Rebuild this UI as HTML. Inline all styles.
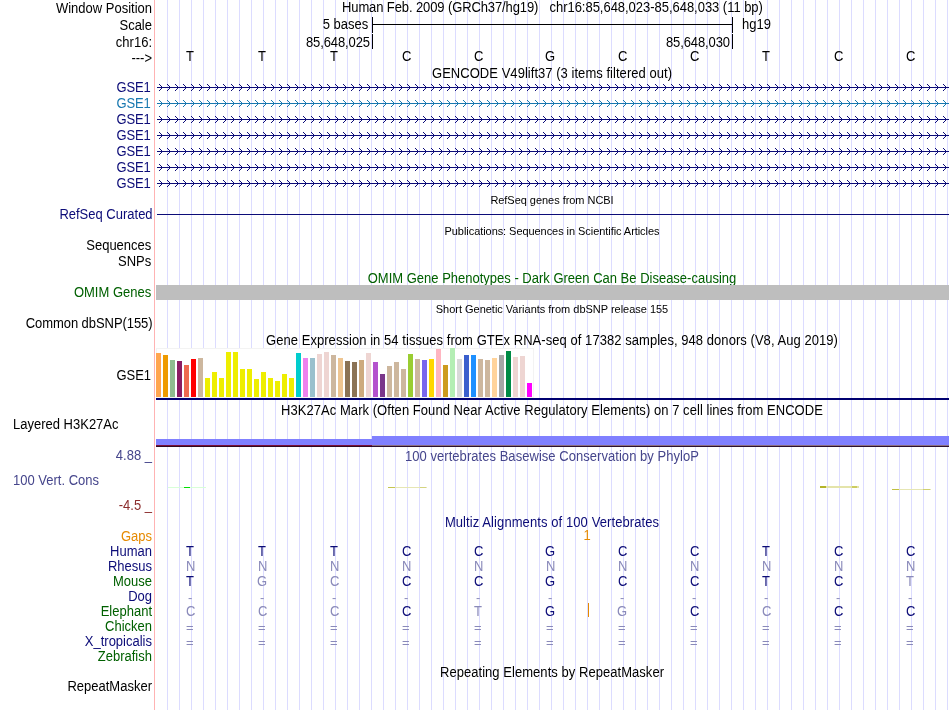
<!DOCTYPE html><html><head><meta charset="utf-8"><title>UCSC Genome Browser</title><style>
html,body{margin:0;padding:0;background:#fff}
#c{position:relative;will-change:transform;width:950px;height:710px;overflow:hidden;background:#fff;font-family:"Liberation Sans",sans-serif;font-size:13px;color:#000}
#c div{position:absolute;white-space:nowrap;line-height:16px;height:16px;transform:scaleY(1.06);transform-origin:0 12.5px}
.l{right:798px;text-align:right}
.t{left:155px;width:794px;text-align:center}
.s{font-size:11px}
.g{top:0;width:1px;height:710px !important;background:#dcdcff;transform:none !important}
.b{text-align:center;width:20px}
.n{color:#00008b}.d{color:#0c0c78}.gr{color:#006000}
svg{position:absolute;left:0;top:0}

</style></head><body><div id="c">
<div class="g" style="left:154px;background:#ffb3b3"></div>
<div class="g" style="left:167px"></div>
<div class="g" style="left:179px"></div>
<div class="g" style="left:191px"></div>
<div class="g" style="left:203px"></div>
<div class="g" style="left:215px"></div>
<div class="g" style="left:227px"></div>
<div class="g" style="left:239px"></div>
<div class="g" style="left:251px"></div>
<div class="g" style="left:263px"></div>
<div class="g" style="left:275px"></div>
<div class="g" style="left:287px"></div>
<div class="g" style="left:299px"></div>
<div class="g" style="left:311px"></div>
<div class="g" style="left:323px"></div>
<div class="g" style="left:335px"></div>
<div class="g" style="left:347px"></div>
<div class="g" style="left:359px"></div>
<div class="g" style="left:371px"></div>
<div class="g" style="left:383px"></div>
<div class="g" style="left:395px"></div>
<div class="g" style="left:407px"></div>
<div class="g" style="left:419px"></div>
<div class="g" style="left:431px"></div>
<div class="g" style="left:443px"></div>
<div class="g" style="left:455px"></div>
<div class="g" style="left:467px"></div>
<div class="g" style="left:479px"></div>
<div class="g" style="left:491px"></div>
<div class="g" style="left:503px"></div>
<div class="g" style="left:515px"></div>
<div class="g" style="left:527px"></div>
<div class="g" style="left:539px"></div>
<div class="g" style="left:551px"></div>
<div class="g" style="left:563px"></div>
<div class="g" style="left:575px"></div>
<div class="g" style="left:587px"></div>
<div class="g" style="left:599px"></div>
<div class="g" style="left:611px"></div>
<div class="g" style="left:623px"></div>
<div class="g" style="left:635px"></div>
<div class="g" style="left:647px"></div>
<div class="g" style="left:659px"></div>
<div class="g" style="left:671px"></div>
<div class="g" style="left:683px"></div>
<div class="g" style="left:695px"></div>
<div class="g" style="left:707px"></div>
<div class="g" style="left:719px"></div>
<div class="g" style="left:731px"></div>
<div class="g" style="left:743px"></div>
<div class="g" style="left:755px"></div>
<div class="g" style="left:767px"></div>
<div class="g" style="left:779px"></div>
<div class="g" style="left:791px"></div>
<div class="g" style="left:803px"></div>
<div class="g" style="left:815px"></div>
<div class="g" style="left:827px"></div>
<div class="g" style="left:839px"></div>
<div class="g" style="left:851px"></div>
<div class="g" style="left:863px"></div>
<div class="g" style="left:875px"></div>
<div class="g" style="left:887px"></div>
<div class="g" style="left:899px"></div>
<div class="g" style="left:911px"></div>
<div class="g" style="left:923px"></div>
<div class="g" style="left:935px"></div>
<div class="g" style="left:947px"></div>
<div class="l " style="top:1px;right:798px;letter-spacing:0px;">Window Position</div>
<div class="l " style="top:18px;right:798px;letter-spacing:0px;">Scale</div>
<div class="l " style="top:35px;right:798px;letter-spacing:0px;">chr16:</div>
<div class="l " style="top:51px;right:798px;letter-spacing:0px;">---&gt;</div>
<div style="top:0px;left:342px;letter-spacing:-0.11px">Human Feb. 2009 (GRCh37/hg19)</div>
<div style="top:0px;left:549.5px;letter-spacing:-0.03px">chr16:85,648,023-85,648,033 (11 bp)</div>
<div style="top:17px;right:581.7px">5 bases</div>
<div style="top:17px;left:742px">hg19</div>
<div style="top:35px;right:580px;letter-spacing:-0.1px">85,648,025</div>
<div style="top:35px;right:220px;letter-spacing:-0.1px">85,648,030</div>
<div class="b" style="top:49px;left:180.1px">T</div>
<div class="b" style="top:49px;left:252.1px">T</div>
<div class="b" style="top:49px;left:324.1px">T</div>
<div class="b" style="top:49px;left:396.7px">C</div>
<div class="b" style="top:49px;left:468.7px">C</div>
<div class="b" style="top:49px;left:540.0px">G</div>
<div class="b" style="top:49px;left:612.7px">C</div>
<div class="b" style="top:49px;left:684.7px">C</div>
<div class="b" style="top:49px;left:756.1px">T</div>
<div class="b" style="top:49px;left:828.7px">C</div>
<div class="b" style="top:49px;left:900.7px">C</div>
<div class="t " style="top:66px;letter-spacing:0.04px;">GENCODE V49lift37 (3 items filtered out)</div>
<div class="l " style="top:80px;right:799.35px;letter-spacing:-0.15px;color:#0c0c78">GSE1</div>
<div class="l " style="top:96px;right:799.35px;letter-spacing:-0.15px;color:#1878b0">GSE1</div>
<div class="l " style="top:112px;right:799.35px;letter-spacing:-0.15px;color:#0c0c78">GSE1</div>
<div class="l " style="top:128px;right:799.35px;letter-spacing:-0.15px;color:#0c0c78">GSE1</div>
<div class="l " style="top:144px;right:799.35px;letter-spacing:-0.15px;color:#0c0c78">GSE1</div>
<div class="l " style="top:160px;right:799.35px;letter-spacing:-0.15px;color:#0c0c78">GSE1</div>
<div class="l " style="top:176px;right:799.35px;letter-spacing:-0.15px;color:#0c0c78">GSE1</div>
<div class="t s" style="top:192px;letter-spacing:-0.04px;">RefSeq genes from NCBI</div>
<div class="l " style="top:207px;right:797.4px;letter-spacing:0px;color:#0c0c78">RefSeq Curated</div>
<div class="t s" style="top:223px;letter-spacing:-0.06px;">Publications: Sequences in Scientific Articles</div>
<div class="l " style="top:238px;right:798.7px;letter-spacing:0px;">Sequences</div>
<div class="l " style="top:254px;right:798.8px;letter-spacing:0px;">SNPs</div>
<div class="t " style="top:271px;letter-spacing:0px;color:#006000">OMIM Gene Phenotypes - Dark Green Can Be Disease-causing</div>
<div class="l " style="top:285px;right:798.8px;letter-spacing:0px;color:#006000">OMIM Genes</div>
<div class="t s" style="top:301px;letter-spacing:-0.016px;">Short Genetic Variants from dbSNP release 155</div>
<div class="l " style="top:316px;right:797.4599999999999px;letter-spacing:-0.06px;">Common dbSNP(155)</div>
<div class="t " style="top:333px;letter-spacing:0.052px;">Gene Expression in 54 tissues from GTEx RNA-seq of 17382 samples, 948 donors (V8, Aug 2019)</div>
<div class="l " style="top:368px;right:799.1px;letter-spacing:-0.1px;">GSE1</div>
<div class="t " style="top:403px;letter-spacing:0.05px;">H3K27Ac Mark (Often Found Near Active Regulatory Elements) on 7 cell lines from ENCODE</div>
<div style="top:417px;left:13px">Layered H3K27Ac</div>
<div class="l " style="top:448px;right:798px;letter-spacing:0px;color:#46468c">4.88 _</div>
<div class="t " style="top:449px;letter-spacing:0.043px;color:#46468c">100 vertebrates Basewise Conservation by PhyloP</div>
<div style="top:473px;left:13px;color:#46468c">100 Vert. Cons</div>
<div class="l " style="top:498px;right:798px;letter-spacing:0px;color:#8c2d2d">-4.5 _</div>
<div class="t " style="top:515px;letter-spacing:0.09px;color:#0c0c78">Multiz Alignments of 100 Vertebrates</div>
<div class="l " style="top:529px;right:798px;letter-spacing:0px;color:#e68a00">Gaps</div>
<div class="l " style="top:544px;right:798px;letter-spacing:0px;color:#0c0c78">Human</div>
<div class="l " style="top:559px;right:798px;letter-spacing:0px;color:#0c0c78">Rhesus</div>
<div class="l " style="top:574px;right:798px;letter-spacing:0px;color:#006000">Mouse</div>
<div class="l " style="top:589px;right:798px;letter-spacing:0px;color:#0c0c78">Dog</div>
<div class="l " style="top:604px;right:798px;letter-spacing:0px;color:#006000">Elephant</div>
<div class="l " style="top:619px;right:798px;letter-spacing:0px;color:#006000">Chicken</div>
<div class="l " style="top:634px;right:798px;letter-spacing:0px;color:#0c0c78">X_tropicalis</div>
<div class="l " style="top:649px;right:798px;letter-spacing:0px;color:#006000">Zebrafish</div>
<div class="t " style="top:665px;letter-spacing:0.045px;">Repeating Elements by RepeatMasker</div>
<div class="l " style="top:679px;right:798px;letter-spacing:0px;">RepeatMasker</div>
<div class="b" style="top:544px;left:180.1px;color:#0c0c78;">T</div>
<div class="b" style="top:544px;left:252.1px;color:#0c0c78;">T</div>
<div class="b" style="top:544px;left:324.1px;color:#0c0c78;">T</div>
<div class="b" style="top:544px;left:396.7px;color:#0c0c78;">C</div>
<div class="b" style="top:544px;left:468.7px;color:#0c0c78;">C</div>
<div class="b" style="top:544px;left:540.0px;color:#0c0c78;">G</div>
<div class="b" style="top:544px;left:612.7px;color:#0c0c78;">C</div>
<div class="b" style="top:544px;left:684.7px;color:#0c0c78;">C</div>
<div class="b" style="top:544px;left:756.1px;color:#0c0c78;">T</div>
<div class="b" style="top:544px;left:828.7px;color:#0c0c78;">C</div>
<div class="b" style="top:544px;left:900.7px;color:#0c0c78;">C</div>
<div class="b" style="top:559px;left:180.7px;color:#8a8aba;">N</div>
<div class="b" style="top:559px;left:252.7px;color:#8a8aba;">N</div>
<div class="b" style="top:559px;left:324.7px;color:#8a8aba;">N</div>
<div class="b" style="top:559px;left:396.7px;color:#8a8aba;">N</div>
<div class="b" style="top:559px;left:468.7px;color:#8a8aba;">N</div>
<div class="b" style="top:559px;left:540.7px;color:#8a8aba;">N</div>
<div class="b" style="top:559px;left:612.7px;color:#8a8aba;">N</div>
<div class="b" style="top:559px;left:684.7px;color:#8a8aba;">N</div>
<div class="b" style="top:559px;left:756.7px;color:#8a8aba;">N</div>
<div class="b" style="top:559px;left:828.7px;color:#8a8aba;">N</div>
<div class="b" style="top:559px;left:900.7px;color:#8a8aba;">N</div>
<div class="b" style="top:574px;left:180.1px;color:#0c0c78;">T</div>
<div class="b" style="top:574px;left:252.0px;color:#8a8aba;">G</div>
<div class="b" style="top:574px;left:324.7px;color:#8a8aba;">C</div>
<div class="b" style="top:574px;left:396.7px;color:#0c0c78;">C</div>
<div class="b" style="top:574px;left:468.7px;color:#0c0c78;">C</div>
<div class="b" style="top:574px;left:540.0px;color:#0c0c78;">G</div>
<div class="b" style="top:574px;left:612.7px;color:#0c0c78;">C</div>
<div class="b" style="top:574px;left:684.7px;color:#0c0c78;">C</div>
<div class="b" style="top:574px;left:756.1px;color:#0c0c78;">T</div>
<div class="b" style="top:574px;left:828.7px;color:#0c0c78;">C</div>
<div class="b" style="top:574px;left:900.1px;color:#8a8aba;">T</div>
<div class="b" style="top:589px;left:180.1px;color:#8a8aba;transform:translateY(.8px);">-</div>
<div class="b" style="top:589px;left:252.1px;color:#8a8aba;transform:translateY(.8px);">-</div>
<div class="b" style="top:589px;left:324.1px;color:#8a8aba;transform:translateY(.8px);">-</div>
<div class="b" style="top:589px;left:396.1px;color:#8a8aba;transform:translateY(.8px);">-</div>
<div class="b" style="top:589px;left:468.1px;color:#8a8aba;transform:translateY(.8px);">-</div>
<div class="b" style="top:589px;left:540.1px;color:#8a8aba;transform:translateY(.8px);">-</div>
<div class="b" style="top:589px;left:612.1px;color:#8a8aba;transform:translateY(.8px);">-</div>
<div class="b" style="top:589px;left:684.1px;color:#8a8aba;transform:translateY(.8px);">-</div>
<div class="b" style="top:589px;left:756.1px;color:#8a8aba;transform:translateY(.8px);">-</div>
<div class="b" style="top:589px;left:828.1px;color:#8a8aba;transform:translateY(.8px);">-</div>
<div class="b" style="top:589px;left:900.1px;color:#8a8aba;transform:translateY(.8px);">-</div>
<div class="b" style="top:604px;left:180.7px;color:#8a8aba;">C</div>
<div class="b" style="top:604px;left:252.7px;color:#8a8aba;">C</div>
<div class="b" style="top:604px;left:324.7px;color:#8a8aba;">C</div>
<div class="b" style="top:604px;left:396.7px;color:#0c0c78;">C</div>
<div class="b" style="top:604px;left:468.1px;color:#8a8aba;">T</div>
<div class="b" style="top:604px;left:540.0px;color:#0c0c78;">G</div>
<div class="b" style="top:604px;left:612.0px;color:#8a8aba;">G</div>
<div class="b" style="top:604px;left:684.7px;color:#0c0c78;">C</div>
<div class="b" style="top:604px;left:756.7px;color:#8a8aba;">C</div>
<div class="b" style="top:604px;left:828.7px;color:#0c0c78;">C</div>
<div class="b" style="top:604px;left:900.7px;color:#0c0c78;">C</div>
<div class="b" style="top:619px;left:179.8px;color:#8a8aba;transform:translateY(1.2px) scaleY(.85);transform-origin:0 8.3px;">=</div>
<div class="b" style="top:619px;left:251.8px;color:#8a8aba;transform:translateY(1.2px) scaleY(.85);transform-origin:0 8.3px;">=</div>
<div class="b" style="top:619px;left:323.8px;color:#8a8aba;transform:translateY(1.2px) scaleY(.85);transform-origin:0 8.3px;">=</div>
<div class="b" style="top:619px;left:395.8px;color:#8a8aba;transform:translateY(1.2px) scaleY(.85);transform-origin:0 8.3px;">=</div>
<div class="b" style="top:619px;left:467.8px;color:#8a8aba;transform:translateY(1.2px) scaleY(.85);transform-origin:0 8.3px;">=</div>
<div class="b" style="top:619px;left:539.8px;color:#8a8aba;transform:translateY(1.2px) scaleY(.85);transform-origin:0 8.3px;">=</div>
<div class="b" style="top:619px;left:611.8px;color:#8a8aba;transform:translateY(1.2px) scaleY(.85);transform-origin:0 8.3px;">=</div>
<div class="b" style="top:619px;left:683.8px;color:#8a8aba;transform:translateY(1.2px) scaleY(.85);transform-origin:0 8.3px;">=</div>
<div class="b" style="top:619px;left:755.8px;color:#8a8aba;transform:translateY(1.2px) scaleY(.85);transform-origin:0 8.3px;">=</div>
<div class="b" style="top:619px;left:827.8px;color:#8a8aba;transform:translateY(1.2px) scaleY(.85);transform-origin:0 8.3px;">=</div>
<div class="b" style="top:619px;left:899.8px;color:#8a8aba;transform:translateY(1.2px) scaleY(.85);transform-origin:0 8.3px;">=</div>
<div class="b" style="top:634px;left:179.8px;color:#8a8aba;transform:translateY(1.2px) scaleY(.85);transform-origin:0 8.3px;">=</div>
<div class="b" style="top:634px;left:251.8px;color:#8a8aba;transform:translateY(1.2px) scaleY(.85);transform-origin:0 8.3px;">=</div>
<div class="b" style="top:634px;left:323.8px;color:#8a8aba;transform:translateY(1.2px) scaleY(.85);transform-origin:0 8.3px;">=</div>
<div class="b" style="top:634px;left:395.8px;color:#8a8aba;transform:translateY(1.2px) scaleY(.85);transform-origin:0 8.3px;">=</div>
<div class="b" style="top:634px;left:467.8px;color:#8a8aba;transform:translateY(1.2px) scaleY(.85);transform-origin:0 8.3px;">=</div>
<div class="b" style="top:634px;left:539.8px;color:#8a8aba;transform:translateY(1.2px) scaleY(.85);transform-origin:0 8.3px;">=</div>
<div class="b" style="top:634px;left:611.8px;color:#8a8aba;transform:translateY(1.2px) scaleY(.85);transform-origin:0 8.3px;">=</div>
<div class="b" style="top:634px;left:683.8px;color:#8a8aba;transform:translateY(1.2px) scaleY(.85);transform-origin:0 8.3px;">=</div>
<div class="b" style="top:634px;left:755.8px;color:#8a8aba;transform:translateY(1.2px) scaleY(.85);transform-origin:0 8.3px;">=</div>
<div class="b" style="top:634px;left:827.8px;color:#8a8aba;transform:translateY(1.2px) scaleY(.85);transform-origin:0 8.3px;">=</div>
<div class="b" style="top:634px;left:899.8px;color:#8a8aba;transform:translateY(1.2px) scaleY(.85);transform-origin:0 8.3px;">=</div>
<div style="top:528px;left:583.5px;color:#e68a00">1</div>
<svg width="950" height="710" viewBox="0 0 950 710" shape-rendering="crispEdges">
<path d="M372.5 17v15.5M732.5 17v15.5M372 24.5h361M372.5 34v15M732.5 34v15" stroke="#000" fill="none"/>
<path d="M157 87.5h792" stroke="#0c0c78" fill="none"/>
<path d="M159 84l3.5 3.5l-3.5 3.5M167 84l3.5 3.5l-3.5 3.5M175 84l3.5 3.5l-3.5 3.5M183 84l3.5 3.5l-3.5 3.5M191 84l3.5 3.5l-3.5 3.5M199 84l3.5 3.5l-3.5 3.5M207 84l3.5 3.5l-3.5 3.5M215 84l3.5 3.5l-3.5 3.5M223 84l3.5 3.5l-3.5 3.5M231 84l3.5 3.5l-3.5 3.5M239 84l3.5 3.5l-3.5 3.5M247 84l3.5 3.5l-3.5 3.5M255 84l3.5 3.5l-3.5 3.5M263 84l3.5 3.5l-3.5 3.5M271 84l3.5 3.5l-3.5 3.5M279 84l3.5 3.5l-3.5 3.5M287 84l3.5 3.5l-3.5 3.5M295 84l3.5 3.5l-3.5 3.5M303 84l3.5 3.5l-3.5 3.5M311 84l3.5 3.5l-3.5 3.5M319 84l3.5 3.5l-3.5 3.5M327 84l3.5 3.5l-3.5 3.5M335 84l3.5 3.5l-3.5 3.5M343 84l3.5 3.5l-3.5 3.5M351 84l3.5 3.5l-3.5 3.5M359 84l3.5 3.5l-3.5 3.5M367 84l3.5 3.5l-3.5 3.5M375 84l3.5 3.5l-3.5 3.5M383 84l3.5 3.5l-3.5 3.5M391 84l3.5 3.5l-3.5 3.5M399 84l3.5 3.5l-3.5 3.5M407 84l3.5 3.5l-3.5 3.5M415 84l3.5 3.5l-3.5 3.5M423 84l3.5 3.5l-3.5 3.5M431 84l3.5 3.5l-3.5 3.5M439 84l3.5 3.5l-3.5 3.5M447 84l3.5 3.5l-3.5 3.5M455 84l3.5 3.5l-3.5 3.5M463 84l3.5 3.5l-3.5 3.5M471 84l3.5 3.5l-3.5 3.5M479 84l3.5 3.5l-3.5 3.5M487 84l3.5 3.5l-3.5 3.5M495 84l3.5 3.5l-3.5 3.5M503 84l3.5 3.5l-3.5 3.5M511 84l3.5 3.5l-3.5 3.5M519 84l3.5 3.5l-3.5 3.5M527 84l3.5 3.5l-3.5 3.5M535 84l3.5 3.5l-3.5 3.5M543 84l3.5 3.5l-3.5 3.5M551 84l3.5 3.5l-3.5 3.5M559 84l3.5 3.5l-3.5 3.5M567 84l3.5 3.5l-3.5 3.5M575 84l3.5 3.5l-3.5 3.5M583 84l3.5 3.5l-3.5 3.5M591 84l3.5 3.5l-3.5 3.5M599 84l3.5 3.5l-3.5 3.5M607 84l3.5 3.5l-3.5 3.5M615 84l3.5 3.5l-3.5 3.5M623 84l3.5 3.5l-3.5 3.5M631 84l3.5 3.5l-3.5 3.5M639 84l3.5 3.5l-3.5 3.5M647 84l3.5 3.5l-3.5 3.5M655 84l3.5 3.5l-3.5 3.5M663 84l3.5 3.5l-3.5 3.5M671 84l3.5 3.5l-3.5 3.5M679 84l3.5 3.5l-3.5 3.5M687 84l3.5 3.5l-3.5 3.5M695 84l3.5 3.5l-3.5 3.5M703 84l3.5 3.5l-3.5 3.5M711 84l3.5 3.5l-3.5 3.5M719 84l3.5 3.5l-3.5 3.5M727 84l3.5 3.5l-3.5 3.5M735 84l3.5 3.5l-3.5 3.5M743 84l3.5 3.5l-3.5 3.5M751 84l3.5 3.5l-3.5 3.5M759 84l3.5 3.5l-3.5 3.5M767 84l3.5 3.5l-3.5 3.5M775 84l3.5 3.5l-3.5 3.5M783 84l3.5 3.5l-3.5 3.5M791 84l3.5 3.5l-3.5 3.5M799 84l3.5 3.5l-3.5 3.5M807 84l3.5 3.5l-3.5 3.5M815 84l3.5 3.5l-3.5 3.5M823 84l3.5 3.5l-3.5 3.5M831 84l3.5 3.5l-3.5 3.5M839 84l3.5 3.5l-3.5 3.5M847 84l3.5 3.5l-3.5 3.5M855 84l3.5 3.5l-3.5 3.5M863 84l3.5 3.5l-3.5 3.5M871 84l3.5 3.5l-3.5 3.5M879 84l3.5 3.5l-3.5 3.5M887 84l3.5 3.5l-3.5 3.5M895 84l3.5 3.5l-3.5 3.5M903 84l3.5 3.5l-3.5 3.5M911 84l3.5 3.5l-3.5 3.5M919 84l3.5 3.5l-3.5 3.5M927 84l3.5 3.5l-3.5 3.5M935 84l3.5 3.5l-3.5 3.5M943 84l3.5 3.5l-3.5 3.5" stroke="#0c0c78" fill="none" shape-rendering="auto"/>
<path d="M157 103.5h792" stroke="#1878b0" fill="none"/>
<path d="M159 100l3.5 3.5l-3.5 3.5M167 100l3.5 3.5l-3.5 3.5M175 100l3.5 3.5l-3.5 3.5M183 100l3.5 3.5l-3.5 3.5M191 100l3.5 3.5l-3.5 3.5M199 100l3.5 3.5l-3.5 3.5M207 100l3.5 3.5l-3.5 3.5M215 100l3.5 3.5l-3.5 3.5M223 100l3.5 3.5l-3.5 3.5M231 100l3.5 3.5l-3.5 3.5M239 100l3.5 3.5l-3.5 3.5M247 100l3.5 3.5l-3.5 3.5M255 100l3.5 3.5l-3.5 3.5M263 100l3.5 3.5l-3.5 3.5M271 100l3.5 3.5l-3.5 3.5M279 100l3.5 3.5l-3.5 3.5M287 100l3.5 3.5l-3.5 3.5M295 100l3.5 3.5l-3.5 3.5M303 100l3.5 3.5l-3.5 3.5M311 100l3.5 3.5l-3.5 3.5M319 100l3.5 3.5l-3.5 3.5M327 100l3.5 3.5l-3.5 3.5M335 100l3.5 3.5l-3.5 3.5M343 100l3.5 3.5l-3.5 3.5M351 100l3.5 3.5l-3.5 3.5M359 100l3.5 3.5l-3.5 3.5M367 100l3.5 3.5l-3.5 3.5M375 100l3.5 3.5l-3.5 3.5M383 100l3.5 3.5l-3.5 3.5M391 100l3.5 3.5l-3.5 3.5M399 100l3.5 3.5l-3.5 3.5M407 100l3.5 3.5l-3.5 3.5M415 100l3.5 3.5l-3.5 3.5M423 100l3.5 3.5l-3.5 3.5M431 100l3.5 3.5l-3.5 3.5M439 100l3.5 3.5l-3.5 3.5M447 100l3.5 3.5l-3.5 3.5M455 100l3.5 3.5l-3.5 3.5M463 100l3.5 3.5l-3.5 3.5M471 100l3.5 3.5l-3.5 3.5M479 100l3.5 3.5l-3.5 3.5M487 100l3.5 3.5l-3.5 3.5M495 100l3.5 3.5l-3.5 3.5M503 100l3.5 3.5l-3.5 3.5M511 100l3.5 3.5l-3.5 3.5M519 100l3.5 3.5l-3.5 3.5M527 100l3.5 3.5l-3.5 3.5M535 100l3.5 3.5l-3.5 3.5M543 100l3.5 3.5l-3.5 3.5M551 100l3.5 3.5l-3.5 3.5M559 100l3.5 3.5l-3.5 3.5M567 100l3.5 3.5l-3.5 3.5M575 100l3.5 3.5l-3.5 3.5M583 100l3.5 3.5l-3.5 3.5M591 100l3.5 3.5l-3.5 3.5M599 100l3.5 3.5l-3.5 3.5M607 100l3.5 3.5l-3.5 3.5M615 100l3.5 3.5l-3.5 3.5M623 100l3.5 3.5l-3.5 3.5M631 100l3.5 3.5l-3.5 3.5M639 100l3.5 3.5l-3.5 3.5M647 100l3.5 3.5l-3.5 3.5M655 100l3.5 3.5l-3.5 3.5M663 100l3.5 3.5l-3.5 3.5M671 100l3.5 3.5l-3.5 3.5M679 100l3.5 3.5l-3.5 3.5M687 100l3.5 3.5l-3.5 3.5M695 100l3.5 3.5l-3.5 3.5M703 100l3.5 3.5l-3.5 3.5M711 100l3.5 3.5l-3.5 3.5M719 100l3.5 3.5l-3.5 3.5M727 100l3.5 3.5l-3.5 3.5M735 100l3.5 3.5l-3.5 3.5M743 100l3.5 3.5l-3.5 3.5M751 100l3.5 3.5l-3.5 3.5M759 100l3.5 3.5l-3.5 3.5M767 100l3.5 3.5l-3.5 3.5M775 100l3.5 3.5l-3.5 3.5M783 100l3.5 3.5l-3.5 3.5M791 100l3.5 3.5l-3.5 3.5M799 100l3.5 3.5l-3.5 3.5M807 100l3.5 3.5l-3.5 3.5M815 100l3.5 3.5l-3.5 3.5M823 100l3.5 3.5l-3.5 3.5M831 100l3.5 3.5l-3.5 3.5M839 100l3.5 3.5l-3.5 3.5M847 100l3.5 3.5l-3.5 3.5M855 100l3.5 3.5l-3.5 3.5M863 100l3.5 3.5l-3.5 3.5M871 100l3.5 3.5l-3.5 3.5M879 100l3.5 3.5l-3.5 3.5M887 100l3.5 3.5l-3.5 3.5M895 100l3.5 3.5l-3.5 3.5M903 100l3.5 3.5l-3.5 3.5M911 100l3.5 3.5l-3.5 3.5M919 100l3.5 3.5l-3.5 3.5M927 100l3.5 3.5l-3.5 3.5M935 100l3.5 3.5l-3.5 3.5M943 100l3.5 3.5l-3.5 3.5" stroke="#1878b0" fill="none" shape-rendering="auto"/>
<path d="M157 119.5h792" stroke="#0c0c78" fill="none"/>
<path d="M159 116l3.5 3.5l-3.5 3.5M167 116l3.5 3.5l-3.5 3.5M175 116l3.5 3.5l-3.5 3.5M183 116l3.5 3.5l-3.5 3.5M191 116l3.5 3.5l-3.5 3.5M199 116l3.5 3.5l-3.5 3.5M207 116l3.5 3.5l-3.5 3.5M215 116l3.5 3.5l-3.5 3.5M223 116l3.5 3.5l-3.5 3.5M231 116l3.5 3.5l-3.5 3.5M239 116l3.5 3.5l-3.5 3.5M247 116l3.5 3.5l-3.5 3.5M255 116l3.5 3.5l-3.5 3.5M263 116l3.5 3.5l-3.5 3.5M271 116l3.5 3.5l-3.5 3.5M279 116l3.5 3.5l-3.5 3.5M287 116l3.5 3.5l-3.5 3.5M295 116l3.5 3.5l-3.5 3.5M303 116l3.5 3.5l-3.5 3.5M311 116l3.5 3.5l-3.5 3.5M319 116l3.5 3.5l-3.5 3.5M327 116l3.5 3.5l-3.5 3.5M335 116l3.5 3.5l-3.5 3.5M343 116l3.5 3.5l-3.5 3.5M351 116l3.5 3.5l-3.5 3.5M359 116l3.5 3.5l-3.5 3.5M367 116l3.5 3.5l-3.5 3.5M375 116l3.5 3.5l-3.5 3.5M383 116l3.5 3.5l-3.5 3.5M391 116l3.5 3.5l-3.5 3.5M399 116l3.5 3.5l-3.5 3.5M407 116l3.5 3.5l-3.5 3.5M415 116l3.5 3.5l-3.5 3.5M423 116l3.5 3.5l-3.5 3.5M431 116l3.5 3.5l-3.5 3.5M439 116l3.5 3.5l-3.5 3.5M447 116l3.5 3.5l-3.5 3.5M455 116l3.5 3.5l-3.5 3.5M463 116l3.5 3.5l-3.5 3.5M471 116l3.5 3.5l-3.5 3.5M479 116l3.5 3.5l-3.5 3.5M487 116l3.5 3.5l-3.5 3.5M495 116l3.5 3.5l-3.5 3.5M503 116l3.5 3.5l-3.5 3.5M511 116l3.5 3.5l-3.5 3.5M519 116l3.5 3.5l-3.5 3.5M527 116l3.5 3.5l-3.5 3.5M535 116l3.5 3.5l-3.5 3.5M543 116l3.5 3.5l-3.5 3.5M551 116l3.5 3.5l-3.5 3.5M559 116l3.5 3.5l-3.5 3.5M567 116l3.5 3.5l-3.5 3.5M575 116l3.5 3.5l-3.5 3.5M583 116l3.5 3.5l-3.5 3.5M591 116l3.5 3.5l-3.5 3.5M599 116l3.5 3.5l-3.5 3.5M607 116l3.5 3.5l-3.5 3.5M615 116l3.5 3.5l-3.5 3.5M623 116l3.5 3.5l-3.5 3.5M631 116l3.5 3.5l-3.5 3.5M639 116l3.5 3.5l-3.5 3.5M647 116l3.5 3.5l-3.5 3.5M655 116l3.5 3.5l-3.5 3.5M663 116l3.5 3.5l-3.5 3.5M671 116l3.5 3.5l-3.5 3.5M679 116l3.5 3.5l-3.5 3.5M687 116l3.5 3.5l-3.5 3.5M695 116l3.5 3.5l-3.5 3.5M703 116l3.5 3.5l-3.5 3.5M711 116l3.5 3.5l-3.5 3.5M719 116l3.5 3.5l-3.5 3.5M727 116l3.5 3.5l-3.5 3.5M735 116l3.5 3.5l-3.5 3.5M743 116l3.5 3.5l-3.5 3.5M751 116l3.5 3.5l-3.5 3.5M759 116l3.5 3.5l-3.5 3.5M767 116l3.5 3.5l-3.5 3.5M775 116l3.5 3.5l-3.5 3.5M783 116l3.5 3.5l-3.5 3.5M791 116l3.5 3.5l-3.5 3.5M799 116l3.5 3.5l-3.5 3.5M807 116l3.5 3.5l-3.5 3.5M815 116l3.5 3.5l-3.5 3.5M823 116l3.5 3.5l-3.5 3.5M831 116l3.5 3.5l-3.5 3.5M839 116l3.5 3.5l-3.5 3.5M847 116l3.5 3.5l-3.5 3.5M855 116l3.5 3.5l-3.5 3.5M863 116l3.5 3.5l-3.5 3.5M871 116l3.5 3.5l-3.5 3.5M879 116l3.5 3.5l-3.5 3.5M887 116l3.5 3.5l-3.5 3.5M895 116l3.5 3.5l-3.5 3.5M903 116l3.5 3.5l-3.5 3.5M911 116l3.5 3.5l-3.5 3.5M919 116l3.5 3.5l-3.5 3.5M927 116l3.5 3.5l-3.5 3.5M935 116l3.5 3.5l-3.5 3.5M943 116l3.5 3.5l-3.5 3.5" stroke="#0c0c78" fill="none" shape-rendering="auto"/>
<path d="M157 135.5h792" stroke="#0c0c78" fill="none"/>
<path d="M159 132l3.5 3.5l-3.5 3.5M167 132l3.5 3.5l-3.5 3.5M175 132l3.5 3.5l-3.5 3.5M183 132l3.5 3.5l-3.5 3.5M191 132l3.5 3.5l-3.5 3.5M199 132l3.5 3.5l-3.5 3.5M207 132l3.5 3.5l-3.5 3.5M215 132l3.5 3.5l-3.5 3.5M223 132l3.5 3.5l-3.5 3.5M231 132l3.5 3.5l-3.5 3.5M239 132l3.5 3.5l-3.5 3.5M247 132l3.5 3.5l-3.5 3.5M255 132l3.5 3.5l-3.5 3.5M263 132l3.5 3.5l-3.5 3.5M271 132l3.5 3.5l-3.5 3.5M279 132l3.5 3.5l-3.5 3.5M287 132l3.5 3.5l-3.5 3.5M295 132l3.5 3.5l-3.5 3.5M303 132l3.5 3.5l-3.5 3.5M311 132l3.5 3.5l-3.5 3.5M319 132l3.5 3.5l-3.5 3.5M327 132l3.5 3.5l-3.5 3.5M335 132l3.5 3.5l-3.5 3.5M343 132l3.5 3.5l-3.5 3.5M351 132l3.5 3.5l-3.5 3.5M359 132l3.5 3.5l-3.5 3.5M367 132l3.5 3.5l-3.5 3.5M375 132l3.5 3.5l-3.5 3.5M383 132l3.5 3.5l-3.5 3.5M391 132l3.5 3.5l-3.5 3.5M399 132l3.5 3.5l-3.5 3.5M407 132l3.5 3.5l-3.5 3.5M415 132l3.5 3.5l-3.5 3.5M423 132l3.5 3.5l-3.5 3.5M431 132l3.5 3.5l-3.5 3.5M439 132l3.5 3.5l-3.5 3.5M447 132l3.5 3.5l-3.5 3.5M455 132l3.5 3.5l-3.5 3.5M463 132l3.5 3.5l-3.5 3.5M471 132l3.5 3.5l-3.5 3.5M479 132l3.5 3.5l-3.5 3.5M487 132l3.5 3.5l-3.5 3.5M495 132l3.5 3.5l-3.5 3.5M503 132l3.5 3.5l-3.5 3.5M511 132l3.5 3.5l-3.5 3.5M519 132l3.5 3.5l-3.5 3.5M527 132l3.5 3.5l-3.5 3.5M535 132l3.5 3.5l-3.5 3.5M543 132l3.5 3.5l-3.5 3.5M551 132l3.5 3.5l-3.5 3.5M559 132l3.5 3.5l-3.5 3.5M567 132l3.5 3.5l-3.5 3.5M575 132l3.5 3.5l-3.5 3.5M583 132l3.5 3.5l-3.5 3.5M591 132l3.5 3.5l-3.5 3.5M599 132l3.5 3.5l-3.5 3.5M607 132l3.5 3.5l-3.5 3.5M615 132l3.5 3.5l-3.5 3.5M623 132l3.5 3.5l-3.5 3.5M631 132l3.5 3.5l-3.5 3.5M639 132l3.5 3.5l-3.5 3.5M647 132l3.5 3.5l-3.5 3.5M655 132l3.5 3.5l-3.5 3.5M663 132l3.5 3.5l-3.5 3.5M671 132l3.5 3.5l-3.5 3.5M679 132l3.5 3.5l-3.5 3.5M687 132l3.5 3.5l-3.5 3.5M695 132l3.5 3.5l-3.5 3.5M703 132l3.5 3.5l-3.5 3.5M711 132l3.5 3.5l-3.5 3.5M719 132l3.5 3.5l-3.5 3.5M727 132l3.5 3.5l-3.5 3.5M735 132l3.5 3.5l-3.5 3.5M743 132l3.5 3.5l-3.5 3.5M751 132l3.5 3.5l-3.5 3.5M759 132l3.5 3.5l-3.5 3.5M767 132l3.5 3.5l-3.5 3.5M775 132l3.5 3.5l-3.5 3.5M783 132l3.5 3.5l-3.5 3.5M791 132l3.5 3.5l-3.5 3.5M799 132l3.5 3.5l-3.5 3.5M807 132l3.5 3.5l-3.5 3.5M815 132l3.5 3.5l-3.5 3.5M823 132l3.5 3.5l-3.5 3.5M831 132l3.5 3.5l-3.5 3.5M839 132l3.5 3.5l-3.5 3.5M847 132l3.5 3.5l-3.5 3.5M855 132l3.5 3.5l-3.5 3.5M863 132l3.5 3.5l-3.5 3.5M871 132l3.5 3.5l-3.5 3.5M879 132l3.5 3.5l-3.5 3.5M887 132l3.5 3.5l-3.5 3.5M895 132l3.5 3.5l-3.5 3.5M903 132l3.5 3.5l-3.5 3.5M911 132l3.5 3.5l-3.5 3.5M919 132l3.5 3.5l-3.5 3.5M927 132l3.5 3.5l-3.5 3.5M935 132l3.5 3.5l-3.5 3.5M943 132l3.5 3.5l-3.5 3.5" stroke="#0c0c78" fill="none" shape-rendering="auto"/>
<path d="M157 151.5h792" stroke="#0c0c78" fill="none"/>
<path d="M159 148l3.5 3.5l-3.5 3.5M167 148l3.5 3.5l-3.5 3.5M175 148l3.5 3.5l-3.5 3.5M183 148l3.5 3.5l-3.5 3.5M191 148l3.5 3.5l-3.5 3.5M199 148l3.5 3.5l-3.5 3.5M207 148l3.5 3.5l-3.5 3.5M215 148l3.5 3.5l-3.5 3.5M223 148l3.5 3.5l-3.5 3.5M231 148l3.5 3.5l-3.5 3.5M239 148l3.5 3.5l-3.5 3.5M247 148l3.5 3.5l-3.5 3.5M255 148l3.5 3.5l-3.5 3.5M263 148l3.5 3.5l-3.5 3.5M271 148l3.5 3.5l-3.5 3.5M279 148l3.5 3.5l-3.5 3.5M287 148l3.5 3.5l-3.5 3.5M295 148l3.5 3.5l-3.5 3.5M303 148l3.5 3.5l-3.5 3.5M311 148l3.5 3.5l-3.5 3.5M319 148l3.5 3.5l-3.5 3.5M327 148l3.5 3.5l-3.5 3.5M335 148l3.5 3.5l-3.5 3.5M343 148l3.5 3.5l-3.5 3.5M351 148l3.5 3.5l-3.5 3.5M359 148l3.5 3.5l-3.5 3.5M367 148l3.5 3.5l-3.5 3.5M375 148l3.5 3.5l-3.5 3.5M383 148l3.5 3.5l-3.5 3.5M391 148l3.5 3.5l-3.5 3.5M399 148l3.5 3.5l-3.5 3.5M407 148l3.5 3.5l-3.5 3.5M415 148l3.5 3.5l-3.5 3.5M423 148l3.5 3.5l-3.5 3.5M431 148l3.5 3.5l-3.5 3.5M439 148l3.5 3.5l-3.5 3.5M447 148l3.5 3.5l-3.5 3.5M455 148l3.5 3.5l-3.5 3.5M463 148l3.5 3.5l-3.5 3.5M471 148l3.5 3.5l-3.5 3.5M479 148l3.5 3.5l-3.5 3.5M487 148l3.5 3.5l-3.5 3.5M495 148l3.5 3.5l-3.5 3.5M503 148l3.5 3.5l-3.5 3.5M511 148l3.5 3.5l-3.5 3.5M519 148l3.5 3.5l-3.5 3.5M527 148l3.5 3.5l-3.5 3.5M535 148l3.5 3.5l-3.5 3.5M543 148l3.5 3.5l-3.5 3.5M551 148l3.5 3.5l-3.5 3.5M559 148l3.5 3.5l-3.5 3.5M567 148l3.5 3.5l-3.5 3.5M575 148l3.5 3.5l-3.5 3.5M583 148l3.5 3.5l-3.5 3.5M591 148l3.5 3.5l-3.5 3.5M599 148l3.5 3.5l-3.5 3.5M607 148l3.5 3.5l-3.5 3.5M615 148l3.5 3.5l-3.5 3.5M623 148l3.5 3.5l-3.5 3.5M631 148l3.5 3.5l-3.5 3.5M639 148l3.5 3.5l-3.5 3.5M647 148l3.5 3.5l-3.5 3.5M655 148l3.5 3.5l-3.5 3.5M663 148l3.5 3.5l-3.5 3.5M671 148l3.5 3.5l-3.5 3.5M679 148l3.5 3.5l-3.5 3.5M687 148l3.5 3.5l-3.5 3.5M695 148l3.5 3.5l-3.5 3.5M703 148l3.5 3.5l-3.5 3.5M711 148l3.5 3.5l-3.5 3.5M719 148l3.5 3.5l-3.5 3.5M727 148l3.5 3.5l-3.5 3.5M735 148l3.5 3.5l-3.5 3.5M743 148l3.5 3.5l-3.5 3.5M751 148l3.5 3.5l-3.5 3.5M759 148l3.5 3.5l-3.5 3.5M767 148l3.5 3.5l-3.5 3.5M775 148l3.5 3.5l-3.5 3.5M783 148l3.5 3.5l-3.5 3.5M791 148l3.5 3.5l-3.5 3.5M799 148l3.5 3.5l-3.5 3.5M807 148l3.5 3.5l-3.5 3.5M815 148l3.5 3.5l-3.5 3.5M823 148l3.5 3.5l-3.5 3.5M831 148l3.5 3.5l-3.5 3.5M839 148l3.5 3.5l-3.5 3.5M847 148l3.5 3.5l-3.5 3.5M855 148l3.5 3.5l-3.5 3.5M863 148l3.5 3.5l-3.5 3.5M871 148l3.5 3.5l-3.5 3.5M879 148l3.5 3.5l-3.5 3.5M887 148l3.5 3.5l-3.5 3.5M895 148l3.5 3.5l-3.5 3.5M903 148l3.5 3.5l-3.5 3.5M911 148l3.5 3.5l-3.5 3.5M919 148l3.5 3.5l-3.5 3.5M927 148l3.5 3.5l-3.5 3.5M935 148l3.5 3.5l-3.5 3.5M943 148l3.5 3.5l-3.5 3.5" stroke="#0c0c78" fill="none" shape-rendering="auto"/>
<path d="M157 167.5h792" stroke="#0c0c78" fill="none"/>
<path d="M159 164l3.5 3.5l-3.5 3.5M167 164l3.5 3.5l-3.5 3.5M175 164l3.5 3.5l-3.5 3.5M183 164l3.5 3.5l-3.5 3.5M191 164l3.5 3.5l-3.5 3.5M199 164l3.5 3.5l-3.5 3.5M207 164l3.5 3.5l-3.5 3.5M215 164l3.5 3.5l-3.5 3.5M223 164l3.5 3.5l-3.5 3.5M231 164l3.5 3.5l-3.5 3.5M239 164l3.5 3.5l-3.5 3.5M247 164l3.5 3.5l-3.5 3.5M255 164l3.5 3.5l-3.5 3.5M263 164l3.5 3.5l-3.5 3.5M271 164l3.5 3.5l-3.5 3.5M279 164l3.5 3.5l-3.5 3.5M287 164l3.5 3.5l-3.5 3.5M295 164l3.5 3.5l-3.5 3.5M303 164l3.5 3.5l-3.5 3.5M311 164l3.5 3.5l-3.5 3.5M319 164l3.5 3.5l-3.5 3.5M327 164l3.5 3.5l-3.5 3.5M335 164l3.5 3.5l-3.5 3.5M343 164l3.5 3.5l-3.5 3.5M351 164l3.5 3.5l-3.5 3.5M359 164l3.5 3.5l-3.5 3.5M367 164l3.5 3.5l-3.5 3.5M375 164l3.5 3.5l-3.5 3.5M383 164l3.5 3.5l-3.5 3.5M391 164l3.5 3.5l-3.5 3.5M399 164l3.5 3.5l-3.5 3.5M407 164l3.5 3.5l-3.5 3.5M415 164l3.5 3.5l-3.5 3.5M423 164l3.5 3.5l-3.5 3.5M431 164l3.5 3.5l-3.5 3.5M439 164l3.5 3.5l-3.5 3.5M447 164l3.5 3.5l-3.5 3.5M455 164l3.5 3.5l-3.5 3.5M463 164l3.5 3.5l-3.5 3.5M471 164l3.5 3.5l-3.5 3.5M479 164l3.5 3.5l-3.5 3.5M487 164l3.5 3.5l-3.5 3.5M495 164l3.5 3.5l-3.5 3.5M503 164l3.5 3.5l-3.5 3.5M511 164l3.5 3.5l-3.5 3.5M519 164l3.5 3.5l-3.5 3.5M527 164l3.5 3.5l-3.5 3.5M535 164l3.5 3.5l-3.5 3.5M543 164l3.5 3.5l-3.5 3.5M551 164l3.5 3.5l-3.5 3.5M559 164l3.5 3.5l-3.5 3.5M567 164l3.5 3.5l-3.5 3.5M575 164l3.5 3.5l-3.5 3.5M583 164l3.5 3.5l-3.5 3.5M591 164l3.5 3.5l-3.5 3.5M599 164l3.5 3.5l-3.5 3.5M607 164l3.5 3.5l-3.5 3.5M615 164l3.5 3.5l-3.5 3.5M623 164l3.5 3.5l-3.5 3.5M631 164l3.5 3.5l-3.5 3.5M639 164l3.5 3.5l-3.5 3.5M647 164l3.5 3.5l-3.5 3.5M655 164l3.5 3.5l-3.5 3.5M663 164l3.5 3.5l-3.5 3.5M671 164l3.5 3.5l-3.5 3.5M679 164l3.5 3.5l-3.5 3.5M687 164l3.5 3.5l-3.5 3.5M695 164l3.5 3.5l-3.5 3.5M703 164l3.5 3.5l-3.5 3.5M711 164l3.5 3.5l-3.5 3.5M719 164l3.5 3.5l-3.5 3.5M727 164l3.5 3.5l-3.5 3.5M735 164l3.5 3.5l-3.5 3.5M743 164l3.5 3.5l-3.5 3.5M751 164l3.5 3.5l-3.5 3.5M759 164l3.5 3.5l-3.5 3.5M767 164l3.5 3.5l-3.5 3.5M775 164l3.5 3.5l-3.5 3.5M783 164l3.5 3.5l-3.5 3.5M791 164l3.5 3.5l-3.5 3.5M799 164l3.5 3.5l-3.5 3.5M807 164l3.5 3.5l-3.5 3.5M815 164l3.5 3.5l-3.5 3.5M823 164l3.5 3.5l-3.5 3.5M831 164l3.5 3.5l-3.5 3.5M839 164l3.5 3.5l-3.5 3.5M847 164l3.5 3.5l-3.5 3.5M855 164l3.5 3.5l-3.5 3.5M863 164l3.5 3.5l-3.5 3.5M871 164l3.5 3.5l-3.5 3.5M879 164l3.5 3.5l-3.5 3.5M887 164l3.5 3.5l-3.5 3.5M895 164l3.5 3.5l-3.5 3.5M903 164l3.5 3.5l-3.5 3.5M911 164l3.5 3.5l-3.5 3.5M919 164l3.5 3.5l-3.5 3.5M927 164l3.5 3.5l-3.5 3.5M935 164l3.5 3.5l-3.5 3.5M943 164l3.5 3.5l-3.5 3.5" stroke="#0c0c78" fill="none" shape-rendering="auto"/>
<path d="M157 183.5h792" stroke="#0c0c78" fill="none"/>
<path d="M159 180l3.5 3.5l-3.5 3.5M167 180l3.5 3.5l-3.5 3.5M175 180l3.5 3.5l-3.5 3.5M183 180l3.5 3.5l-3.5 3.5M191 180l3.5 3.5l-3.5 3.5M199 180l3.5 3.5l-3.5 3.5M207 180l3.5 3.5l-3.5 3.5M215 180l3.5 3.5l-3.5 3.5M223 180l3.5 3.5l-3.5 3.5M231 180l3.5 3.5l-3.5 3.5M239 180l3.5 3.5l-3.5 3.5M247 180l3.5 3.5l-3.5 3.5M255 180l3.5 3.5l-3.5 3.5M263 180l3.5 3.5l-3.5 3.5M271 180l3.5 3.5l-3.5 3.5M279 180l3.5 3.5l-3.5 3.5M287 180l3.5 3.5l-3.5 3.5M295 180l3.5 3.5l-3.5 3.5M303 180l3.5 3.5l-3.5 3.5M311 180l3.5 3.5l-3.5 3.5M319 180l3.5 3.5l-3.5 3.5M327 180l3.5 3.5l-3.5 3.5M335 180l3.5 3.5l-3.5 3.5M343 180l3.5 3.5l-3.5 3.5M351 180l3.5 3.5l-3.5 3.5M359 180l3.5 3.5l-3.5 3.5M367 180l3.5 3.5l-3.5 3.5M375 180l3.5 3.5l-3.5 3.5M383 180l3.5 3.5l-3.5 3.5M391 180l3.5 3.5l-3.5 3.5M399 180l3.5 3.5l-3.5 3.5M407 180l3.5 3.5l-3.5 3.5M415 180l3.5 3.5l-3.5 3.5M423 180l3.5 3.5l-3.5 3.5M431 180l3.5 3.5l-3.5 3.5M439 180l3.5 3.5l-3.5 3.5M447 180l3.5 3.5l-3.5 3.5M455 180l3.5 3.5l-3.5 3.5M463 180l3.5 3.5l-3.5 3.5M471 180l3.5 3.5l-3.5 3.5M479 180l3.5 3.5l-3.5 3.5M487 180l3.5 3.5l-3.5 3.5M495 180l3.5 3.5l-3.5 3.5M503 180l3.5 3.5l-3.5 3.5M511 180l3.5 3.5l-3.5 3.5M519 180l3.5 3.5l-3.5 3.5M527 180l3.5 3.5l-3.5 3.5M535 180l3.5 3.5l-3.5 3.5M543 180l3.5 3.5l-3.5 3.5M551 180l3.5 3.5l-3.5 3.5M559 180l3.5 3.5l-3.5 3.5M567 180l3.5 3.5l-3.5 3.5M575 180l3.5 3.5l-3.5 3.5M583 180l3.5 3.5l-3.5 3.5M591 180l3.5 3.5l-3.5 3.5M599 180l3.5 3.5l-3.5 3.5M607 180l3.5 3.5l-3.5 3.5M615 180l3.5 3.5l-3.5 3.5M623 180l3.5 3.5l-3.5 3.5M631 180l3.5 3.5l-3.5 3.5M639 180l3.5 3.5l-3.5 3.5M647 180l3.5 3.5l-3.5 3.5M655 180l3.5 3.5l-3.5 3.5M663 180l3.5 3.5l-3.5 3.5M671 180l3.5 3.5l-3.5 3.5M679 180l3.5 3.5l-3.5 3.5M687 180l3.5 3.5l-3.5 3.5M695 180l3.5 3.5l-3.5 3.5M703 180l3.5 3.5l-3.5 3.5M711 180l3.5 3.5l-3.5 3.5M719 180l3.5 3.5l-3.5 3.5M727 180l3.5 3.5l-3.5 3.5M735 180l3.5 3.5l-3.5 3.5M743 180l3.5 3.5l-3.5 3.5M751 180l3.5 3.5l-3.5 3.5M759 180l3.5 3.5l-3.5 3.5M767 180l3.5 3.5l-3.5 3.5M775 180l3.5 3.5l-3.5 3.5M783 180l3.5 3.5l-3.5 3.5M791 180l3.5 3.5l-3.5 3.5M799 180l3.5 3.5l-3.5 3.5M807 180l3.5 3.5l-3.5 3.5M815 180l3.5 3.5l-3.5 3.5M823 180l3.5 3.5l-3.5 3.5M831 180l3.5 3.5l-3.5 3.5M839 180l3.5 3.5l-3.5 3.5M847 180l3.5 3.5l-3.5 3.5M855 180l3.5 3.5l-3.5 3.5M863 180l3.5 3.5l-3.5 3.5M871 180l3.5 3.5l-3.5 3.5M879 180l3.5 3.5l-3.5 3.5M887 180l3.5 3.5l-3.5 3.5M895 180l3.5 3.5l-3.5 3.5M903 180l3.5 3.5l-3.5 3.5M911 180l3.5 3.5l-3.5 3.5M919 180l3.5 3.5l-3.5 3.5M927 180l3.5 3.5l-3.5 3.5M935 180l3.5 3.5l-3.5 3.5M943 180l3.5 3.5l-3.5 3.5" stroke="#0c0c78" fill="none" shape-rendering="auto"/>
<path d="M157 214.5h792" stroke="#0c0c78" fill="none"/>
<rect x="156" y="285" width="793" height="15" fill="#bebebe"/>
<rect x="156.5" y="348.5" width="377" height="49" fill="#fff" stroke="#f3f3f3"/>
<rect x="156" y="353" width="5" height="44" fill="#FFA54F"/>
<rect x="163" y="355" width="5" height="42" fill="#EE9A00"/>
<rect x="170" y="360" width="5" height="37" fill="#8FBC8F"/>
<rect x="177" y="361" width="5" height="36" fill="#8B1C62"/>
<rect x="184" y="365" width="5" height="32" fill="#EE6A50"/>
<rect x="191" y="359" width="5" height="38" fill="#FF0000"/>
<rect x="198" y="358" width="5" height="39" fill="#CDB79E"/>
<rect x="205" y="378" width="5" height="19" fill="#EEEE00"/>
<rect x="212" y="372" width="5" height="25" fill="#EEEE00"/>
<rect x="219" y="378" width="5" height="19" fill="#EEEE00"/>
<rect x="226" y="352" width="5" height="45" fill="#EEEE00"/>
<rect x="233" y="352" width="5" height="45" fill="#EEEE00"/>
<rect x="240" y="369" width="5" height="28" fill="#EEEE00"/>
<rect x="247" y="369" width="5" height="28" fill="#EEEE00"/>
<rect x="254" y="379" width="5" height="18" fill="#EEEE00"/>
<rect x="261" y="372" width="5" height="25" fill="#EEEE00"/>
<rect x="268" y="378" width="5" height="19" fill="#EEEE00"/>
<rect x="275" y="381" width="5" height="16" fill="#EEEE00"/>
<rect x="282" y="374" width="5" height="23" fill="#EEEE00"/>
<rect x="289" y="378" width="5" height="19" fill="#EEEE00"/>
<rect x="296" y="353" width="5" height="44" fill="#00CDCD"/>
<rect x="303" y="358" width="5" height="39" fill="#EE82EE"/>
<rect x="310" y="358" width="5" height="39" fill="#9AC0CD"/>
<rect x="317" y="354" width="5" height="43" fill="#EED5D2"/>
<rect x="324" y="352" width="5" height="45" fill="#EED5D2"/>
<rect x="331" y="355" width="5" height="42" fill="#CDB79E"/>
<rect x="338" y="358" width="5" height="39" fill="#EEC591"/>
<rect x="345" y="361" width="5" height="36" fill="#8B7355"/>
<rect x="352" y="362" width="5" height="35" fill="#8B7355"/>
<rect x="359" y="360" width="5" height="37" fill="#CDAA7D"/>
<rect x="366" y="353" width="5" height="44" fill="#EED5D2"/>
<rect x="373" y="362" width="5" height="35" fill="#B452CD"/>
<rect x="380" y="374" width="5" height="23" fill="#7A378B"/>
<rect x="387" y="366" width="5" height="31" fill="#CDB79E"/>
<rect x="394" y="362" width="5" height="35" fill="#CDB79E"/>
<rect x="401" y="369" width="5" height="28" fill="#CDB79E"/>
<rect x="408" y="354" width="5" height="43" fill="#9ACD32"/>
<rect x="415" y="359" width="5" height="38" fill="#CDB79E"/>
<rect x="422" y="360" width="5" height="37" fill="#7A67EE"/>
<rect x="429" y="359" width="5" height="38" fill="#FFD700"/>
<rect x="436" y="349" width="5" height="48" fill="#FFB6C1"/>
<rect x="443" y="365" width="5" height="32" fill="#CD9B1D"/>
<rect x="450" y="348" width="5" height="49" fill="#B4EEB4"/>
<rect x="457" y="359" width="5" height="38" fill="#D9D9D9"/>
<rect x="464" y="355" width="5" height="42" fill="#3A5FCD"/>
<rect x="471" y="355" width="5" height="42" fill="#1E90FF"/>
<rect x="478" y="359" width="5" height="38" fill="#CDB79E"/>
<rect x="485" y="360" width="5" height="37" fill="#CDB79E"/>
<rect x="492" y="358" width="5" height="39" fill="#FFD39B"/>
<rect x="499" y="355" width="5" height="42" fill="#A6A6A6"/>
<rect x="506" y="351" width="5" height="46" fill="#008B45"/>
<rect x="513" y="357" width="5" height="40" fill="#EED5D2"/>
<rect x="520" y="356" width="5" height="41" fill="#EED5D2"/>
<rect x="527" y="383" width="5" height="14" fill="#FF00FF"/>
<rect x="156" y="398" width="793" height="2" fill="#000070"/>
<rect x="156" y="439" width="216" height="6" fill="#8080ff"/>
<rect x="372" y="436" width="577" height="9" fill="#8080ff"/>
<rect x="156" y="445" width="216" height="1" fill="#7a1038"/>
<rect x="156" y="446" width="216" height="1" fill="#300820"/>
<rect x="372" y="445" width="577" height="1" fill="#8c7080"/>
<rect x="372" y="446" width="577" height="1" fill="#2c1030"/>
<rect x="168" y="487" width="38" height="1" fill="#d8ffd8"/>
<rect x="184" y="487" width="6" height="1" fill="#00e000"/>
<rect x="388" y="487" width="39" height="1" fill="#e6e6b4"/>
<rect x="388" y="487" width="7" height="1" fill="#c4c450"/>
<rect x="420" y="487" width="6" height="1" fill="#d4d480"/>
<rect x="820" y="486" width="39" height="2" fill="#e4e4aa"/>
<rect x="820" y="486" width="6" height="2" fill="#b4b428"/>
<rect x="852" y="486" width="5" height="2" fill="#cccc60"/>
<rect x="892" y="489" width="39" height="1" fill="#e6e6b4"/>
<rect x="892" y="489" width="7" height="1" fill="#c0c040"/>
<rect x="923" y="489" width="7" height="1" fill="#d0d070"/>
<rect x="588" y="603" width="1" height="14" fill="#e68a00"/>
</svg>
</div></body></html>
